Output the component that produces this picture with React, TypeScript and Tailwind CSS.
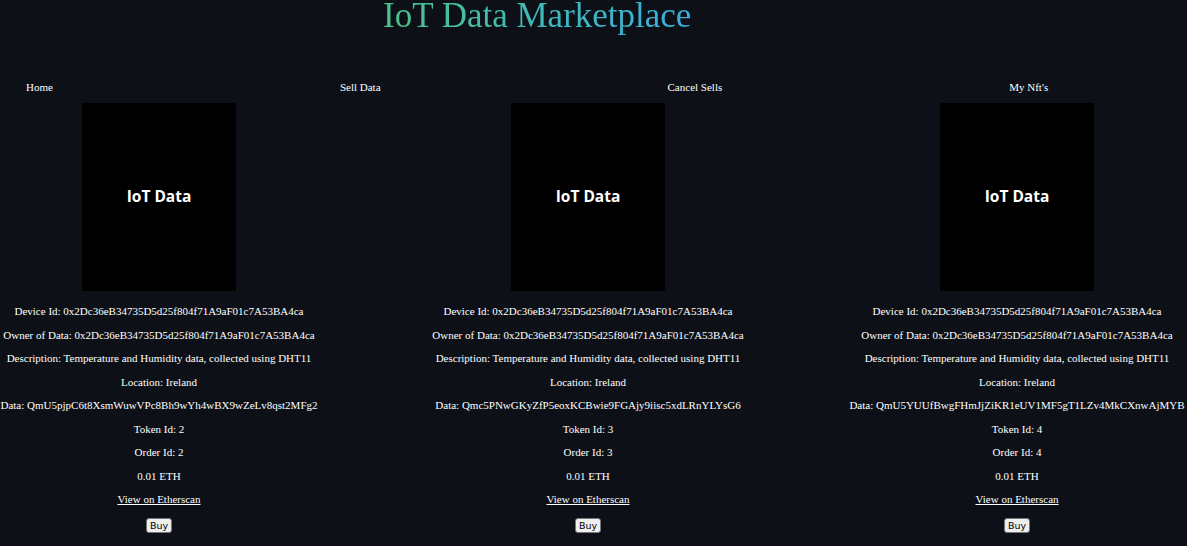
import React from "react";

const OWNER = "0x2Dc36eB34735D5d25f804f71A9aF01c7A53BA4ca";

const items = [
  { data: "QmU5pjpC6t8XsmWuwVPc8Bh9wYh4wBX9wZeLv8qst2MFg2", tokenId: 2, orderId: 2 },
  { data: "Qmc5PNwGKyZfP5eoxKCBwie9FGAjy9iisc5xdLRnYLYsG6", tokenId: 3, orderId: 3 },
  { data: "QmU5YUUfBwgFHmJjZiKR1eUV1MF5gT1LZv4MkCXnwAjMYB", tokenId: 4, orderId: 4 },
];

const Card = ({ item }: { item: (typeof items)[number] }) => (
  <div className="w-[318px] flex flex-col items-center text-center">
    <div className="w-[154px] h-[188px] bg-black flex items-center justify-center">
      <span className="text-white font-bold text-[15.5px] font-['Open_Sans',sans-serif]">IoT Data</span>
    </div>
    <div className="mt-[14px] flex flex-col items-center gap-[10.5px] leading-[13px] whitespace-nowrap">
      <p>Device Id: {OWNER}</p>
      <p>Owner of Data: {OWNER}</p>
      <p>Description: Temperature and Humidity data, collected using DHT11</p>
      <p>Location: Ireland</p>
      <p>Data: {item.data}</p>
      <p>Token Id: {item.tokenId}</p>
      <p>Order Id: {item.orderId}</p>
      <p>0.01 ETH</p>
      <a href="#" className="underline">View on Etherscan</a>
    </div>
    <button className="mt-[12px] bg-[#efefef] text-black border border-[#767676] rounded-[3px] px-[3px] py-[1px] text-[9.5px] leading-[11px] font-['DejaVu_Sans',sans-serif]">
      Buy
    </button>
  </div>
);

export default function App() {
  return (
    <div className="w-full min-h-[546px] bg-[#0d1117] text-white font-['Liberation_Serif',serif] text-[11px] overflow-hidden">
      <div className="pl-[383px]">
        <h1 className="text-[35px] leading-[32px] pb-[6px] bg-gradient-to-r from-[#4cc38a] to-[#3aaee0] bg-clip-text text-transparent w-fit">
          IoT Data Marketplace
        </h1>
      </div>
      <nav className="flex gap-[287px] pl-[26px] mt-[43px] leading-[13px]">
        <a href="#">Home</a>
        <a href="#">Sell Data</a>
        <a href="#">Cancel Sells</a>
        <a href="#">My Nft's</a>
      </nav>
      <div className="flex gap-[111px] mt-[9px]">
        {items.map((item) => (
          <Card key={item.tokenId} item={item} />
        ))}
      </div>
    </div>
  );
}
